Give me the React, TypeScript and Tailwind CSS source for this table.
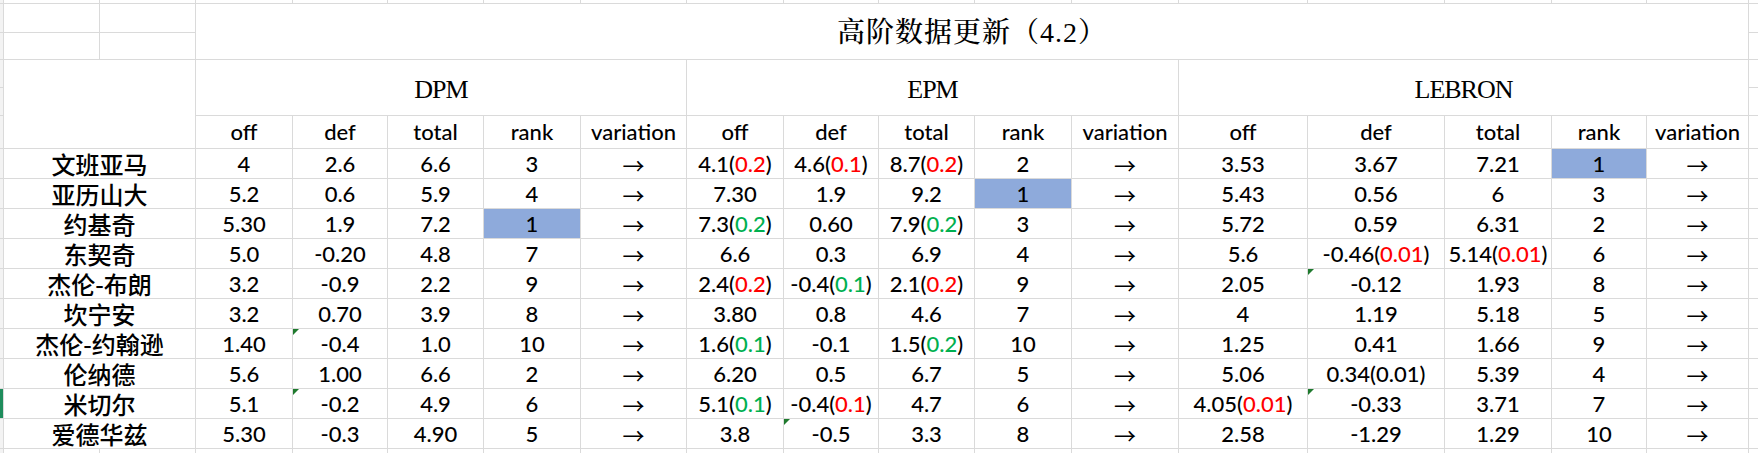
import React from "react";

// spreadsheet-ish table: 高阶数据更新
const COLS =
  "grid-cols-[3px_95px_95px_96px_94px_95px_96px_105px_96px_94px_95px_96px_106px_128px_136px_106px_94px_101px_10px]";
const ROWS = "grid-rows-[3px_28px_26px_27px_27px_32px_repeat(10,29px)_10px]";

const NUM = "font-['Lato','Noto_Sans_CJK_SC',sans-serif] text-[22px] leading-none font-medium text-black";
const SERIF = "font-['Liberation_Serif','Noto_Serif_CJK_SC','Noto_Sans_CJK_SC',serif] leading-none text-black";
const STRIP = "bg-[#f3f3f3]";

type Row = { name: string; groups: string[][] };

const rows: Row[] = [
  { name: "文班亚马", groups: [["4", "2.6", "6.6", "3"], ["4.1(0.2)r", "4.6(0.1)r", "8.7(0.2)r", "2"], ["3.53", "3.67", "7.21", "1"]] },
  { name: "亚历山大", groups: [["5.2", "0.6", "5.9", "4"], ["7.30", "1.9", "9.2", "1"], ["5.43", "0.56", "6", "3"]] },
  { name: "约基奇", groups: [["5.30", "1.9", "7.2", "1"], ["7.3(0.2)g", "0.60", "7.9(0.2)g", "3"], ["5.72", "0.59", "6.31", "2"]] },
  { name: "东契奇", groups: [["5.0", "-0.20", "4.8", "7"], ["6.6", "0.3", "6.9", "4"], ["5.6", "-0.46(0.01)r", "5.14(0.01)r", "6"]] },
  { name: "杰伦-布朗", groups: [["3.2", "-0.9", "2.2", "9"], ["2.4(0.2)r", "-0.4(0.1)g", "2.1(0.2)r", "9"], ["2.05", "-0.12", "1.93", "8"]] },
  { name: "坎宁安", groups: [["3.2", "0.70", "3.9", "8"], ["3.80", "0.8", "4.6", "7"], ["4", "1.19", "5.18", "5"]] },
  { name: "杰伦-约翰逊", groups: [["1.40", "-0.4", "1.0", "10"], ["1.6(0.1)g", "-0.1", "1.5(0.2)g", "10"], ["1.25", "0.41", "1.66", "9"]] },
  { name: "伦纳德", groups: [["5.6", "1.00", "6.6", "2"], ["6.20", "0.5", "6.7", "5"], ["5.06", "0.34(0.01)", "5.39", "4"]] },
  { name: "米切尔", groups: [["5.1", "-0.2", "4.9", "6"], ["5.1(0.1)g", "-0.4(0.1)r", "4.7", "6"], ["4.05(0.01)r", "-0.33", "3.71", "7"]] },
  { name: "爱德华兹", groups: [["5.30", "-0.3", "4.90", "5"], ["3.8", "-0.5", "3.3", "8"], ["2.58", "-1.29", "1.29", "10"]] },
];

// little green corner markers (row-group-col)
const flags = new Set(["4-2-1", "6-0-1", "8-0-1", "8-2-1", "9-1-1"]);

function Value({ text }: { text: string }) {
  const m = text.match(/^(.*?)\((.*)\)([rg]?)$/);
  if (!m) return <span>{text}</span>;
  const color = m[3] === "r" ? "text-[#ff0000]" : m[3] === "g" ? "text-[#00b050]" : "text-black";
  return (
    <span>
      {m[1]}(<span className={color}>{m[2]}</span>)
    </span>
  );
}

export default function App() {
  const heads = ["DPM", "EPM", "LEBRON"];
  const subs = ["off", "def", "total", "rank", "variation"];

  return (
    <div className="w-[1758px] h-[453px] overflow-hidden bg-white">
      <div className={`grid w-max gap-px bg-[#dadada] ${COLS} ${ROWS}`}>
        {/* top sliver row */}
        {Array.from({ length: 19 }).map((_, i) => (
          <div key={`t${i}`} className={i === 0 ? STRIP : "bg-white"} />
        ))}

        {/* title rows */}
        <div className={STRIP} />
        <div className="bg-white" />
        <div className="bg-white" />
        <div className="col-span-15 row-span-2 bg-white flex items-center justify-center pt-[2px]">
          <span className={`${SERIF} text-[28px] font-medium tracking-[1px]`}>高阶数据更新（4.2）</span>
        </div>
        <div className="bg-white" />
        <div className={STRIP} />
        <div className="bg-white" />
        <div className="bg-white" />
        <div className="bg-white" />

        {/* group header rows */}
        <div className={STRIP} />
        <div className="col-span-2 row-span-3 bg-white" />
        {heads.map((h) => (
          <div key={h} className="col-span-5 row-span-2 bg-white flex items-center justify-center pt-[4px]">
            <span className={`${SERIF} text-[26px] tracking-[-1px]`}>{h}</span>
          </div>
        ))}
        <div className="bg-white" />
        <div className={STRIP} />
        <div className="bg-white" />

        {/* sub headers */}
        <div className={STRIP} />
        {heads.map((h) =>
          subs.map((s) => (
            <div key={h + s} className={`bg-white flex items-center justify-center ${NUM}`}>
              {s}
            </div>
          ))
        )}
        <div className="bg-white" />

        {/* data */}
        {rows.map((r, ri) => (
          <React.Fragment key={r.name}>
            <div className={ri === 8 ? "bg-[#1e8c5c]" : STRIP} />
            <div className="col-span-2 bg-white flex items-center justify-center font-['Noto_Sans_CJK_SC',sans-serif] text-[24px] leading-none font-medium text-black">
              {r.name}
            </div>
            {r.groups.map((g, gi) => (
              <React.Fragment key={gi}>
                {g.map((v, ci) => (
                  <div
                    key={ci}
                    className={`relative flex items-center justify-center ${NUM} ${
                      ci === 3 && v === "1" ? "bg-[#8eaadb]" : "bg-white"
                    }`}
                  >
                    {flags.has(`${ri}-${gi}-${ci}`) && (
                      <span className="absolute left-0 top-0 h-0 w-0 border-t-[6px] border-r-[6px] border-t-[#1f7a2e] border-r-transparent" />
                    )}
                    <Value text={v} />
                  </div>
                ))}
                <div className="bg-white flex items-center justify-center font-['Noto_Sans_CJK_SC',sans-serif] text-[22px] leading-none text-black">
                  →
                </div>
              </React.Fragment>
            ))}
            <div className="bg-white" />
          </React.Fragment>
        ))}

        {/* bottom sliver row */}
        {Array.from({ length: 19 }).map((_, i) => (
          <div key={`b${i}`} className={i === 0 ? STRIP : "bg-white"} />
        ))}
      </div>
    </div>
  );
}
